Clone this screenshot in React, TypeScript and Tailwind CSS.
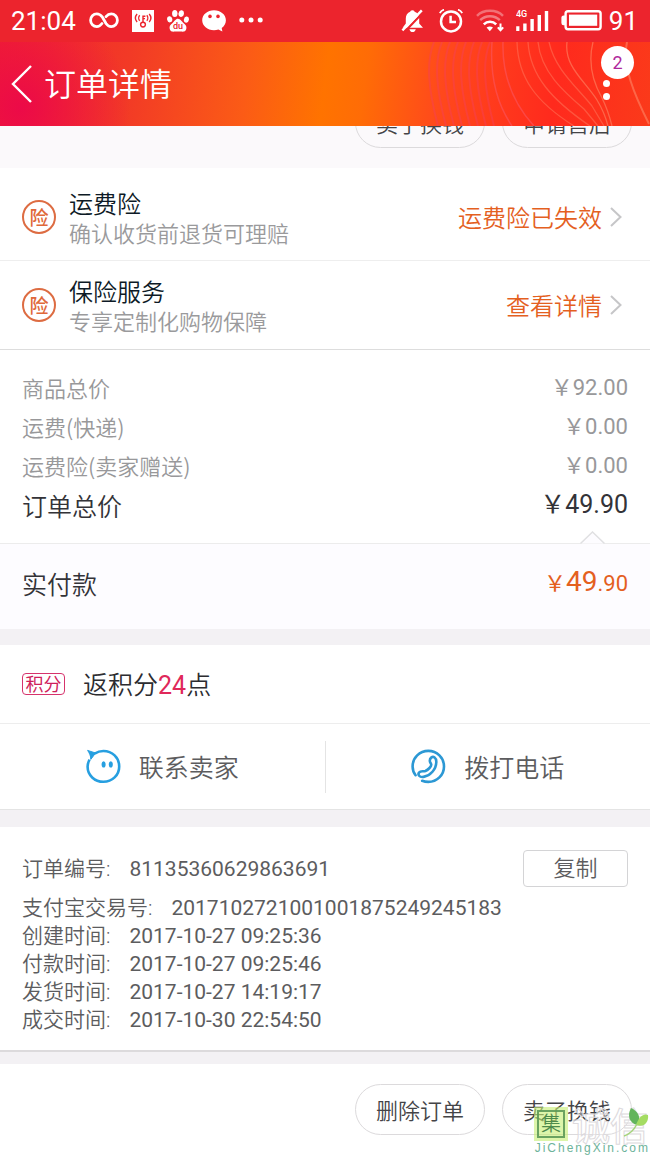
import type { ReactNode } from "react";

type Insurance = { title: string; desc: string; action: string };

const insurances: Insurance[] = [
      { title: "运费险", desc: "确认收货前退货可理赔", action: "运费险已失效" },
      { title: "保险服务", desc: "专享定制化购物保障", action: "查看详情" },
];

const fees = [
      { label: "商品总价", value: "92.00" },
      { label: "运费(快递)", value: "0.00" },
      { label: "运费险(卖家赠送)", value: "0.00" },
];

const times = [
      { label: "支付宝交易号:", value: "2017102721001001875249245183" },
      { label: "创建时间:", value: "2017-10-27 09:25:36" },
      { label: "付款时间:", value: "2017-10-27 09:25:46" },
      { label: "发货时间:", value: "2017-10-27 14:19:17" },
      { label: "成交时间:", value: "2017-10-30 22:54:50" },
];

// digits are set in Roboto, the rest of the page in Noto
const Num = ({ children }: { children: ReactNode }) => (
      <span className="font-['Roboto','Noto_Sans_CJK_SC',sans-serif] font-normal">{children}</span>
);

const PillButton = ({ children }: { children: ReactNode }) => (
      <button type="button" className="h-[51px] w-[130px] shrink-0 rounded-full border border-[#dcdadc] pb-[2px] text-[22px] leading-[30px] text-[#444447]">
            {children}
      </button>
);

const StatusBar = () => (
      <section className="flex h-[42px] items-center justify-between bg-[#ec242d] pr-3 pl-[11px] font-['Roboto',sans-serif] font-normal text-white">
            <div className="flex items-center gap-[13px]">
                  <span className="text-[26px] leading-[30px]">21:04</span>
                  <svg width="30" height="22" viewBox="0 0 30 22" fill="none" stroke="currentColor" strokeWidth="2.8" strokeLinecap="round">
                        <path d="M13 13.5C11.5 15.5 10 16.6 7.8 16.6C4.3 16.6 1.6 13.7 1.6 10.2S4.3 3.9 7.8 3.9C10 3.9 11.6 4.9 13.2 6.9L17 13.5C18.4 15.5 20 16.6 22.2 16.6C25.7 16.6 28.4 13.7 28.4 10.2S25.7 3.9 22.2 3.9C20 3.9 18.5 4.9 17 6.7" />
                  </svg>
                  <svg width="22" height="22" viewBox="0 0 22 22" fill="none" stroke="#ec242d" strokeWidth="1.4">
                        <rect width="22" height="22" fill="#fff" stroke="none" />
                        <circle cx="11" cy="14.6" r="2.4" />
                        <path d="M11 12.4V6.2H13.4M11 8.6H13M7.7 5.2C6.4 6.7 6.4 9.3 7.7 10.8M14.8 5.2C16.1 6.7 16.1 9.3 14.8 10.8M5.1 4C3 6.4 3 9.6 5.1 12M17.2 4C19.3 6.4 19.3 9.6 17.2 12" />
                  </svg>
                  <svg width="22" height="22" viewBox="0 0 22 22" fill="currentColor">
                        <ellipse cx="2.7" cy="9.3" rx="2.6" ry="3.1" transform="rotate(-12 2.7 9.3)" />
                        <ellipse cx="7.8" cy="3.6" rx="2.7" ry="3.5" />
                        <ellipse cx="14.2" cy="3.7" rx="2.7" ry="3.4" transform="rotate(10 14.2 3.7)" />
                        <ellipse cx="19.4" cy="9.6" rx="2.5" ry="3.1" transform="rotate(10 19.4 9.6)" />
                        <path d="M11 8.8C13.6 8.8 14.4 11.2 16.4 13C18.4 14.7 20 16.1 19.3 19C18.6 21.8 16.2 22 14 21.6C12 21.3 10 21.3 8 21.6C5.6 22 3.4 21.7 2.7 19C2 16.2 3.6 14.7 5.6 13C7.6 11.3 8.4 8.8 11 8.8Z" />
                        <text x="11" y="19.4" fill="#ec242d" textAnchor="middle" className="text-[9px] font-medium">du</text>
                  </svg>
                  <svg width="24" height="24" viewBox="0 0 24 24" fill="currentColor">
                        <path d="M12 1.2C5.4 1.2 0.2 5.6 0.2 11.2S5.4 21.2 12 21.2C13.6 21.2 15 21 16.4 20.5L20.4 22.6L19.7 18.9C22.4 17 23.9 14.3 23.9 11.2C23.9 5.6 18.6 1.2 12 1.2Z" />
                        <circle cx="8" cy="7.4" r="1.8" fill="#ec242d" />
                        <circle cx="16" cy="7.4" r="1.8" fill="#ec242d" />
                  </svg>
                  <svg width="24" height="8" viewBox="0 0 24 8" fill="currentColor">
                        <circle cx="2.8" cy="3" r="2.5" />
                        <circle cx="12" cy="3" r="2.5" />
                        <circle cx="21.2" cy="3" r="2.5" />
                  </svg>
            </div>
            <div className="flex items-center">
                  <svg className="mr-[15px]" width="23" height="24" viewBox="0 0 23 24">
                        <path d="M11.4 1.2C13 1.2 13.4 2.2 13.6 2.8C16.8 3.8 18.2 6.4 18.2 9.4V14.4L22 18.8H1.6L4.8 14.4V9.4C4.8 6.4 6.4 3.8 9.2 2.8C9.4 2.2 9.8 1.2 11.4 1.2ZM8.4 20.2H14.8C14.2 22.2 13 23 11.6 23S9 22.2 8.4 20.2Z" fill="currentColor" />
                        <path d="M22.2 3.2L4.4 22" stroke="#ec242d" strokeWidth="2.2" />
                        <path d="M20.8 1.4L1.4 21.4" stroke="currentColor" strokeWidth="2.4" />
                  </svg>
                  <svg className="mr-[13px]" width="24" height="24" viewBox="0 0 24 24" fill="none" stroke="currentColor" strokeWidth="2.5">
                        <circle cx="12" cy="12.4" r="10" />
                        <path d="M11.6 6.8V13H17" />
                        <path d="M0.8 4.2Q2.2 1.4 5 0.7M23.2 4.2Q21.8 1.4 19 0.7" strokeWidth="1.8" />
                  </svg>
                  <svg className="mr-3" width="28" height="24" viewBox="0 0 28 24" fill="none" stroke="currentColor" strokeWidth="2.5">
                        <path d="M1 6.8C7.6 0.2 20.4 0.2 27 6.8" opacity=".35" />
                        <path d="M4.2 11.2C9.4 6 18.6 6 23.8 11.2" opacity=".4" />
                        <path d="M7.8 15.4C11.2 12 16.8 12 20.2 15.4" />
                        <path d="M10.6 18.6C12.6 17 15 17 17 18.6L13.8 22.2Z" fill="currentColor" stroke="none" />
                        <path d="M24.5 14.4V21M21.8 18.4L24.5 21.2L27.2 18.4" strokeWidth="2" />
                  </svg>
                  <svg className="mr-3" width="33" height="24" viewBox="0 0 33 24" fill="currentColor">
                        <text x="0" y="8.4" className="text-[9px] font-medium">4G</text>
                        <path d="M0.2 17.2H3.4V22H0.2ZM7.2 14.6H10.6V22H7.2ZM14.4 10H17.8V22H14.4ZM21.6 6H25V22H21.6ZM28.8 2H32.2V22H28.8Z" />
                  </svg>
                  <svg className="mr-[7px]" width="41" height="22" viewBox="0 0 41 22" fill="none" stroke="currentColor" strokeWidth="2.4">
                        <rect x="4.6" y="1.2" width="35" height="18" rx="2.4" />
                        <path d="M4 6.2H2.6Q1.2 6.2 1.2 7.6V13Q1.2 14.4 2.6 14.4H4" fill="currentColor" strokeWidth="1.6" />
                        <rect x="8" y="4.6" width="28.2" height="11.2" fill="currentColor" stroke="none" />
                  </svg>
                  <span className="text-[26px] leading-[30px]">91</span>
            </div>
      </section>
);

// left edges of the faint wave lines
const fineLines = [428, 436, 444, 452, 460, 468, 476, 484];

const Header = () => (
      <header className="relative flex h-[84px] items-center overflow-hidden bg-[radial-gradient(circle_at_20px_66px,#ec0a48_0,#ed174000_110px),linear-gradient(97deg,#f0222f_0%,#f23a26_20%,#fb5b16_38%,#ff7300_50%,#ff6c06_56%,#ff481c_68%,#ff2a1d_85%,#fb3a1a_100%)] pl-[11px] text-white">
            <svg className="absolute top-0 right-0" width="250" height="84" viewBox="400 42 250 84" fill="none">
                  <g stroke="#f5405a" strokeWidth="2" opacity=".45">
                        {fineLines.map((x) => (
                              <path key={x} d={`M${x + 6} 42C${x - 2} 62 ${x} 88 ${x + 10} 126`} />
                        ))}
                  </g>
                  <g stroke="#fb5560" strokeWidth="1.5" opacity=".6">
                        <path d="M492 42C490 72 494 100 512 126" />
                        <path d="M503 42C502 74 512 102 534 126" />
                  </g>
                  <g stroke="#ff6a50" strokeWidth="1.3" opacity=".65">
                        <path d="M517 42C518 78 536 102 574 126" />
                        <path d="M528 42C530 76 552 100 590 126" />
                        <path d="M538 42C541 72 564 92 584 109L598 126" />
                        <path d="M549 42C555 70 578 88 592 106L604 126" />
                        <path d="M567 42C564 66 584 80 597 100C603 110 606 118 608 126" stroke="#ff8060" />
                        <path d="M593 42C587 66 594 84 602 98C607 108 610 118 612 126" stroke="#ff8060" />
                        <path d="M627 42C622 66 634 94 649 124" stroke="#ff8060" strokeWidth="2" />
                  </g>
            </svg>
            <button type="button" aria-label="返回" className="mr-3">
                  <svg width="21" height="38" viewBox="0 0 21 38" fill="none" stroke="currentColor" strokeWidth="2.4">
                        <path d="M20 1L2 19L20 37" />
                  </svg>
            </button>
            <h1 className="pb-1 text-[32px] leading-10">订单详情</h1>
            <button type="button" className="absolute top-1 right-4 flex w-[33px] flex-col items-start">
                  <span className="flex size-[33px] items-center justify-center rounded-full bg-white text-lg text-[#b0289c]">
                        <Num>2</Num>
                  </span>
                  <span className="mt-px ml-[2px] size-[7px] rounded-full bg-white" />
                  <span className="mt-[6px] ml-[2px] size-[7px] rounded-full bg-white" />
            </button>
      </header>
);

const InsuranceRow = ({ item, className }: { item: Insurance; className: string }) => (
      <a href="#" className={`flex items-center border-b pr-7 pl-[22px] ${className}`}>
            <span className="flex size-[34px] shrink-0 items-center justify-center rounded-full border-2 border-[#dd6c42] pb-px text-[19px] leading-6 font-medium text-[#e0683a]">险</span>
            <div className="ml-[13px] flex-1 pt-[2px] pb-[2px]">
                  <p className="text-2xl leading-[31px] text-[#0d1a26]">{item.title}</p>
                  <p className="text-[22px] leading-[29px] text-[#9a9a9c]">{item.desc}</p>
            </div>
            <span className="text-2xl leading-[30px] text-[#e4601f]">{item.action}</span>
            <svg className="ml-2" width="12" height="20" viewBox="0 0 12 20" fill="none" stroke="#c6c6c8" strokeWidth="2">
                  <path d="M1 1L10.5 10L1 19" />
            </svg>
      </a>
);

const WangwangIcon = () => (
      <svg width="35" height="36" viewBox="0 0 35 36" fill="none" stroke="#279fe0" strokeWidth="2.6" strokeLinejoin="round">
            <path d="M3.6 10.6C2.3 12.8 1.6 15.2 1.6 17.8C1.6 26.2 8.6 32.8 17.4 32.8S33.2 26.2 33.2 17.4S26.2 2 17.4 2C14.2 2 11.2 3 8.6 4.6" />
            <path d="M1.6 1.4L9.6 4L4.8 10.4C4.8 7 3.6 4.4 1.6 1.4Z" fill="#279fe0" strokeWidth="1" />
            <ellipse cx="17.6" cy="15.4" rx="2" ry="3.1" fill="#279fe0" stroke="none" />
            <ellipse cx="24.8" cy="15.4" rx="2" ry="3.1" fill="#279fe0" stroke="none" />
      </svg>
);

const PhoneIcon = () => (
      <svg width="35" height="36" viewBox="0 0 35 36" fill="none" stroke="#2c98d4" strokeWidth="2.6" strokeLinecap="round">
            <path d="M4.6 26.2C2.6 23.6 1.6 20.6 1.6 17.4C1.6 8.8 8.6 1.9 17.3 1.9S33 8.8 33 17.4S26 32.9 17.3 32.9C15.2 32.9 13 32.5 11.2 31.8" />
            <path d="M20.2 8.6C22.4 7 25.4 8.6 25.3 13C25.2 20.4 19.4 26.6 12.6 27.9C8.4 28.7 6.4 25.4 8.2 23.4C9.8 21.4 12.4 22.8 14.4 22C17.2 20.8 20.6 17.4 20.2 15.4C19.8 14 18.8 13.6 18.8 11.8C18.8 10.4 19.3 9.3 20.2 8.6Z" />
      </svg>
);

const Watermark = () => (
      <div className="pointer-events-none absolute right-0 bottom-0 h-12 w-[119px]">
            <div className="flex items-center gap-1 pl-[3px]">
                  <span className="flex size-[34px] items-center justify-center bg-[#c6ee72]/60">
                        <span className="flex size-7 items-center justify-center border-2 border-[#5d9a58]/90 pb-[2px] text-xl leading-6 text-[#4d8a4c]">集</span>
                  </span>
                  <span className="text-[38px] leading-[34px] font-medium whitespace-nowrap text-white/40 [-webkit-text-stroke:1px_#dddadd]">诚信</span>
            </div>
            <svg className="absolute top-0 right-0" width="28" height="32" viewBox="0 0 28 32">
                  <path d="M9 1C16 4 20 11 15 18C7 16 5 8 9 1Z" fill="#62b45c" />
                  <path d="M14 18C17 9 22 6 26 8C27 15 22 21 14 18Z" fill="#a4dc62" />
                  <path d="M15 17C12 23 8 27 2 29" fill="none" stroke="#a4d47a" strokeWidth="1.5" />
            </svg>
            <p className="absolute right-0 bottom-0 font-['Liberation_Sans'] text-xs leading-[14px] font-normal tracking-[2px] whitespace-nowrap text-[#6db39a]">JiChengXin.com</p>
      </div>
);

const App = () => {
      return (
            <main className="min-h-screen bg-white font-['Noto_Sans_CJK_SC',sans-serif] font-[350]">
                  <StatusBar />
                  <Header />

                  <section className="flex h-[42px] items-end justify-end gap-[17px] overflow-hidden bg-[#fbf9fb] pr-[18px] pb-5">
                        <PillButton>卖了换钱</PillButton>
                        <PillButton>申请售后</PillButton>
                  </section>

                  <InsuranceRow item={insurances[0]} className="border-[#eeeeee] pt-[17px] pb-[11px]" />
                  <InsuranceRow item={insurances[1]} className="border-[#dddddd] py-3" />

                  <section className="relative border-b border-[#ececec] px-[22px] pt-[18px] pb-[18px]">
                        {fees.map((fee) => (
                              <div key={fee.label} className="flex justify-between text-[22px] leading-[39px] text-[#98989a]">
                                    <span>{fee.label}</span>
                                    <Num>￥{fee.value}</Num>
                              </div>
                        ))}
                        <div className="flex justify-between text-[25px] leading-10 text-[#333338]">
                              <span>订单总价</span>
                              <Num>￥49.90</Num>
                        </div>
                        <svg className="absolute right-[45px] -bottom-px" width="25" height="13" viewBox="0 0 25 13" fill="#fdfcff" stroke="#e0e0e2" strokeWidth="1.5">
                              <path d="M0.5 12.5L12.5 1L24.5 12.5" />
                        </svg>
                  </section>
                  <section className="flex h-[85px] items-center justify-between bg-[#fdfcff] px-[22px] pb-2">
                        <span className="text-[25px] leading-10 text-[#333338]">实付款</span>
                        <span className="text-[22px] leading-10 text-[#e4601f]">
                              <Num>￥<span className="text-[28px]">49</span>.90</Num>
                        </span>
                  </section>

                  <div className="h-4 bg-[#f3f1f4]" />

                  <section className="flex h-[79px] items-center border-b border-[#ededed] px-[22px]">
                        <span className="flex h-[22px] w-[43px] items-center justify-center rounded-sm border border-[#d6336c] pb-[2px] text-lg leading-5 font-normal text-[#cf1f5c]">积分</span>
                        <p className="ml-[18px] text-[25px] leading-10 text-[#2c2c30]">返积分<span className="text-[#e0285a]"><Num>24</Num></span>点</p>
                  </section>
                  <section className="flex h-[86px] items-center border-b border-[#e4e4e4]">
                        <button type="button" className="flex h-[52px] flex-1 items-center justify-center gap-[18px] border-r border-[#e4e4e4] text-[25px] leading-10 text-[#5c5c5e]">
                              <WangwangIcon />
                              <span className="pb-[2px]">联系卖家</span>
                        </button>
                        <button type="button" className="flex h-[52px] flex-1 items-center justify-center gap-[18px] text-[25px] leading-10 text-[#5c5c5e]">
                              <PhoneIcon />
                              <span className="pb-[2px]">拨打电话</span>
                        </button>
                  </section>

                  <div className="h-[17px] bg-[#f3f1f4]" />

                  <section className="border-b-2 border-[#dcdadc] px-[22px] pt-[23px] pb-4 font-['Roboto','Noto_Sans_CJK_SC',sans-serif] text-[21px] leading-7 text-[#5c5c5e]">
                        <div className="mb-[7px] flex items-center justify-between">
                              <p className="flex gap-[19px] pt-px">
                                    <span>订单编号:</span>
                                    <Num>81135360629863691</Num>
                              </p>
                              <button type="button" className="h-[37px] w-[105px] rounded-sm border border-[#d4d4d6] text-[22px] leading-[30px]">复制</button>
                        </div>
                        {times.map((row) => (
                              <p key={row.label} className="flex gap-[19px]">
                                    <span>{row.label}</span>
                                    <Num>{row.value}</Num>
                              </p>
                        ))}
                  </section>

                  <div className="h-3 bg-[#f3f1f4]" />

                  <footer className="relative flex justify-end gap-[17px] overflow-hidden pt-5 pr-[18px] pb-5">
                        <PillButton>删除订单</PillButton>
                        <PillButton>卖了换钱</PillButton>
                        <Watermark />
                  </footer>
            </main>
      );
};

export default App;
